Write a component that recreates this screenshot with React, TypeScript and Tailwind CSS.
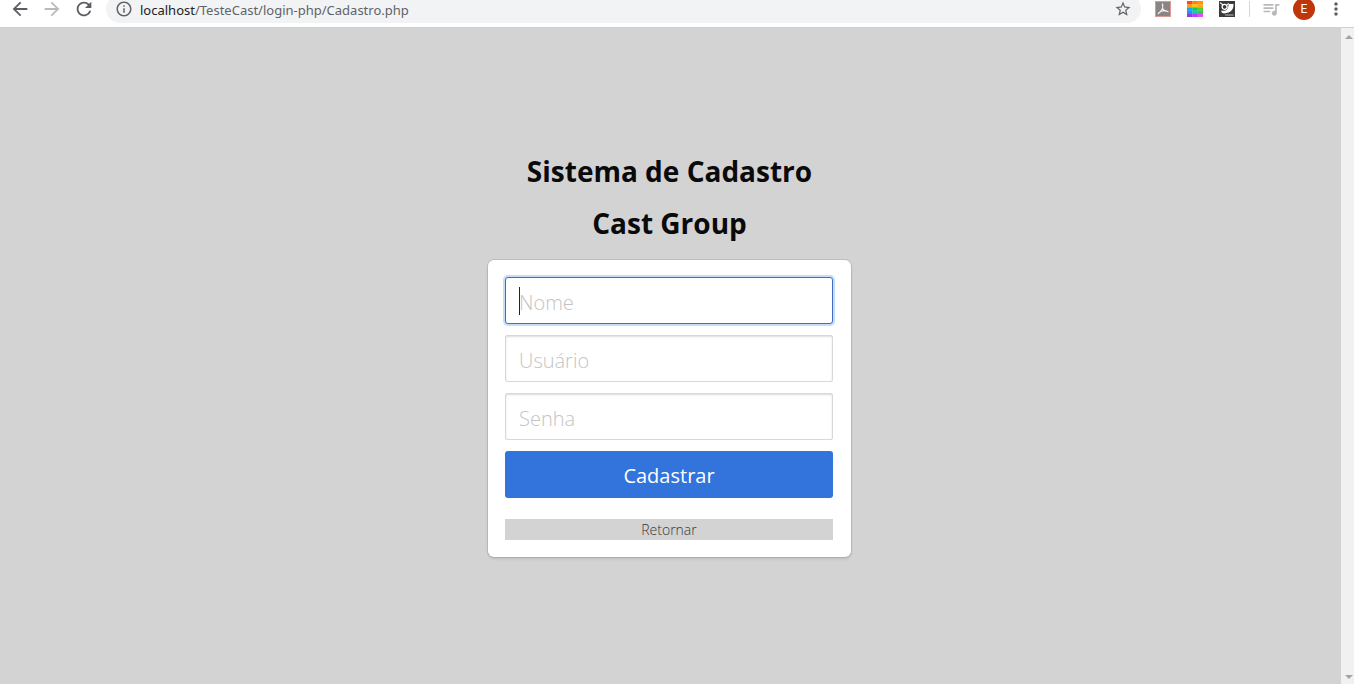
import React from "react";
import {
  MdArrowBack,
  MdArrowForward,
  MdInfoOutline,
  MdMoreVert,
  MdQueueMusic,
  MdRefresh,
  MdStarBorder,
} from "react-icons/md";

const fieldClass =
  "block h-[47px] w-full rounded-[2px] border border-[#d6d9d6] bg-white px-[13px] pt-1 text-xl font-light text-[#363636] shadow-[inset_0_1px_2px_rgba(10,10,10,0.14)] outline-none placeholder:text-[#c4c4c4] placeholder:opacity-100";

function PdfIcon() {
  return (
    <svg width="16" height="16" viewBox="0 0 16 16" aria-hidden="true">
      <rect x="0.5" y="0.5" width="15" height="15" fill="#8a8482" stroke="#d99a94" />
      <path
        d="M7.4 3C8.6 6.5 8 9 3.4 12.6M7.6 7.5C8.6 9.3 10 10.4 13 10.6M5.6 10.4C7.5 9.6 9 9.3 11 9.7"
        fill="none"
        stroke="#f1eeee"
        strokeWidth="1.3"
        strokeLinecap="round"
      />
    </svg>
  );
}

function PaletteIcon() {
  const colors = [
    "#ff4a12", "#ff7f0e", "#ff9800",
    "#ff9f0a", "#f5c400", "#ffa41c",
    "#14a8f0", "#12c85a", "#5ccb2c",
    "#2f8df5", "#18c4c0", "#30c860",
    "#8a3cf5", "#b340f2", "#e64df0",
  ];
  return (
    <svg width="16" height="16" viewBox="0 0 15 15" preserveAspectRatio="none" aria-hidden="true">
      {colors.map((color, i) => (
        <rect key={i} x={(i % 3) * 5} y={Math.floor(i / 3) * 3} width="5.2" height="3.2" fill={color} />
      ))}
    </svg>
  );
}

function InspectorIcon() {
  return (
    <svg width="16" height="16" viewBox="0 0 16 16" aria-hidden="true">
      <rect width="16" height="16" fill="#3a3a3a" />
      <path d="M9.5 3H14.5C14.8 8.5 12 12 5 12.4C2.8 12.4 2 11 2.4 9.6C6.5 10.6 9.8 8.5 9.5 3Z" fill="#fff" />
      <circle cx="5.6" cy="5.8" r="2.5" fill="#3a3a3a" stroke="#fff" strokeWidth="1.3" />
      <path d="M1 1.6L3.8 3.8M8 3.6L10 2.4" stroke="#fff" strokeWidth="1.1" />
      <path d="M6 14H14.5" stroke="#a8a8a8" strokeWidth="1.2" />
    </svg>
  );
}

function BrowserBar() {
  return (
    <header className="h-7 shrink-0 overflow-hidden border-b border-[#d0d0d0] bg-white">
      <div className="-mt-[5px] flex h-7 items-center">
        <nav className="flex shrink-0 items-center pr-1.5 pl-1 text-[#5a5d61]">
          <button type="button" aria-label="Voltar" className="flex h-7 w-8 items-center justify-center">
            <MdArrowBack size={22} />
          </button>
          <button type="button" aria-label="Avançar" className="flex h-7 w-8 items-center justify-center text-[#bababa]">
            <MdArrowForward size={22} />
          </button>
          <button type="button" aria-label="Recarregar" className="flex h-7 w-8 items-center justify-center">
            <MdRefresh size={22} />
          </button>
        </nav>
        <div className="flex h-7 min-w-0 flex-1 items-center rounded-full bg-[#f1f3f4] pr-[9px] pl-[9px] text-[#5f6368]">
          <MdInfoOutline size={18} className="shrink-0" />
          <p className="ml-[7px] flex-1 truncate pt-0.5 font-['Noto_Sans',sans-serif] text-[13px] leading-5">
            <span className="text-[#202124]">localhost</span>/TesteCast/login-php/Cadastro.php
          </p>
          <button type="button" aria-label="Favoritar" className="shrink-0">
            <MdStarBorder size={18} />
          </button>
        </div>
        <div className="flex shrink-0 items-center pr-2 pl-3.5">
          <div className="flex items-center gap-4">
            <PdfIcon />
            <PaletteIcon />
            <InspectorIcon />
          </div>
          <span className="ml-3.5 h-4 w-px bg-[#d4d6d8]" />
          <MdQueueMusic size={20} className="ml-[11px] text-[#b9b9b9]" />
          <button
            type="button"
            aria-label="Perfil"
            className="ml-3 flex size-[22px] items-center justify-center rounded-full bg-[#bf360c] font-[Roboto,sans-serif] text-xs text-white"
          >
            E
          </button>
          <button type="button" aria-label="Menu" className="ml-[11px] text-[#5a5d61]">
            <MdMoreVert size={20} />
          </button>
        </div>
      </div>
    </header>
  );
}

function Scrollbar() {
  return (
    <div className="flex w-[13px] shrink-0 flex-col items-end justify-between bg-[#f1f1f1] pt-[7px] pr-px pb-[5px]" aria-hidden="true">
      <svg width="8" height="4" viewBox="0 0 8 4">
        <path d="M0 4L4 0L8 4Z" fill="#a3a3a3" />
      </svg>
      <svg width="8" height="4" viewBox="0 0 8 4">
        <path d="M0 0L4 4L8 0Z" fill="#a3a3a3" />
      </svg>
    </div>
  );
}

export default function App() {
  return (
    <div className="flex min-h-screen flex-col font-['Open_Sans',sans-serif]">
      <BrowserBar />
      <div className="flex flex-1">
        <main className="flex flex-1 flex-col items-center justify-center gap-[22px] bg-[#d3d3d3] pr-0.5">
          <h1 className="text-[28px] leading-[30px] font-bold text-[#0a0a0a]">Sistema de Cadastro</h1>
          <h2 className="text-[28px] leading-[30px] font-bold text-[#0a0a0a]">Cast Group</h2>
          <form
            className="w-[363px] max-w-full rounded-md bg-white py-[17px] pr-[18px] pl-[17px] shadow-[0_2px_3px_rgba(10,10,10,0.1),0_0_0_1px_rgba(10,10,10,0.1)]"
            onSubmit={(e) => e.preventDefault()}
          >
            <div className="flex flex-col gap-[11px]">
              <div className="relative">
                <input
                  type="text"
                  name="nome"
                  aria-label="Nome"
                  placeholder="Nome"
                  className="block h-[47px] w-full rounded-[3px] border border-[#3e6fc4] bg-white px-[13px] pt-1 text-xl font-light text-[#363636] caret-transparent shadow-[0_0_0_2px_rgba(50,130,240,0.28)] outline-none placeholder:text-[#c4c4c4] placeholder:opacity-100"
                />
                <span className="absolute top-2.5 left-3.5 h-7 w-px bg-[#222]" aria-hidden="true" />
              </div>
              <input type="text" name="usuario" aria-label="Usuário" placeholder="Usuário" className={fieldClass} />
              <input type="password" name="senha" aria-label="Senha" placeholder="Senha" className={fieldClass} />
              <button type="submit" className="h-[47px] w-full rounded-[3px] bg-[#3273dc] pt-[3px] text-xl text-white">
                Cadastrar
              </button>
            </div>
            <a
              href="#retornar"
              className="mt-[21px] block bg-[#d3d3d3] text-center text-sm leading-[21px] font-light text-[#363636]"
            >
              Retornar
            </a>
          </form>
        </main>
        <Scrollbar />
      </div>
    </div>
  );
}
